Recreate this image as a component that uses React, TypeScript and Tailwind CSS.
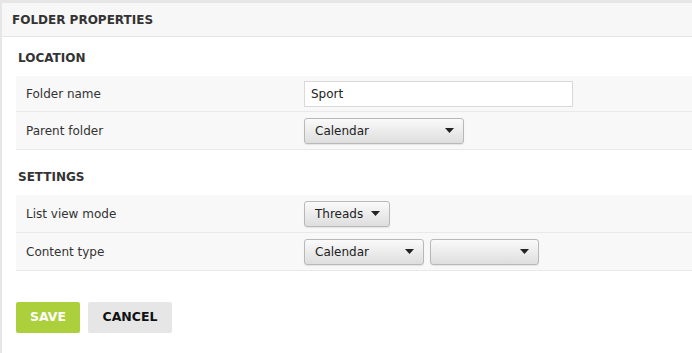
import React from 'react'

const font = "font-['DejaVu_Sans',Verdana,sans-serif]"

const Caret = () => (
  <svg width="9" height="5" viewBox="0 0 9 5" className="shrink-0">
    <path d="M0 0h9L4.5 5z" fill="#222" />
  </svg>
)

const Select = ({ label, width }: { label: string; width: string }) => (
  <div
    className={`${width} h-[26px] flex items-center justify-between pl-[10px] pr-[9px] rounded-[3px] border border-[#b8b8b8] bg-gradient-to-b from-[#fafafa] to-[#dedede] text-[12px] text-[#222] shadow-[0_1px_1px_rgba(0,0,0,0.08)]`}
  >
    <span>{label}</span>
    <Caret />
  </div>
)

const Row = ({ label, children, h = 'h-[38px]' }: { label: string; children: React.ReactNode; h?: string }) => (
  <div className={`flex items-center ${h} bg-[#f8f8f8] border-b border-[#e9e9e9]`}>
    <div className="w-[288px] pl-[10px] text-[12px] text-[#333]">{label}</div>
    <div className="flex items-center gap-[6px]">{children}</div>
  </div>
)

const SectionTitle = ({ children, first }: { children: React.ReactNode; first?: boolean }) => (
  <h3
    className={`${first ? 'pt-[13px]' : 'pt-[19px]'} pb-[10px] pl-[2px] leading-[16px] text-[12px] font-bold text-[#333]`}
  >
    {children}
  </h3>
)

export default function App() {
  return (
    <div className={`${font} h-[353px] bg-[#e6e6e6] pt-[3px] pl-[2px] overflow-hidden`}>
      <div className="h-full bg-white">
        {/* Header */}
        <div className="h-[34px] flex items-center px-[10px] bg-[#f7f7f7] border-b border-[#e6e6e6]">
          <h2 className="text-[12px] font-bold text-[#333]">FOLDER PROPERTIES</h2>
        </div>

        <div className="pl-[14px]">
          <SectionTitle first>LOCATION</SectionTitle>
          <Row label="Folder name" h="h-[36px]">
            <div className="w-[269px] h-[26px] flex items-center px-[6px] bg-white border border-[#d9d9d9] text-[12px] text-[#222]">
              Sport
            </div>
          </Row>
          <Row label="Parent folder">
            <Select label="Calendar" width="w-[160px]" />
          </Row>

          <SectionTitle>SETTINGS</SectionTitle>
          <Row label="List view mode">
            <Select label="Threads" width="w-[86px]" />
          </Row>
          <Row label="Content type">
            <Select label="Calendar" width="w-[120px]" />
            <Select label="" width="w-[109px]" />
          </Row>

          <div className="flex gap-2 mt-[31px]">
            <button className="h-[31px] w-[64px] rounded-[2px] bg-[#abd03b] text-[12.5px] font-bold text-white">
              SAVE
            </button>
            <button className="h-[31px] w-[84px] rounded-[2px] bg-[#e6e6e6] text-[12.5px] font-bold text-[#111]">
              CANCEL
            </button>
          </div>
        </div>
      </div>
    </div>
  )
}
